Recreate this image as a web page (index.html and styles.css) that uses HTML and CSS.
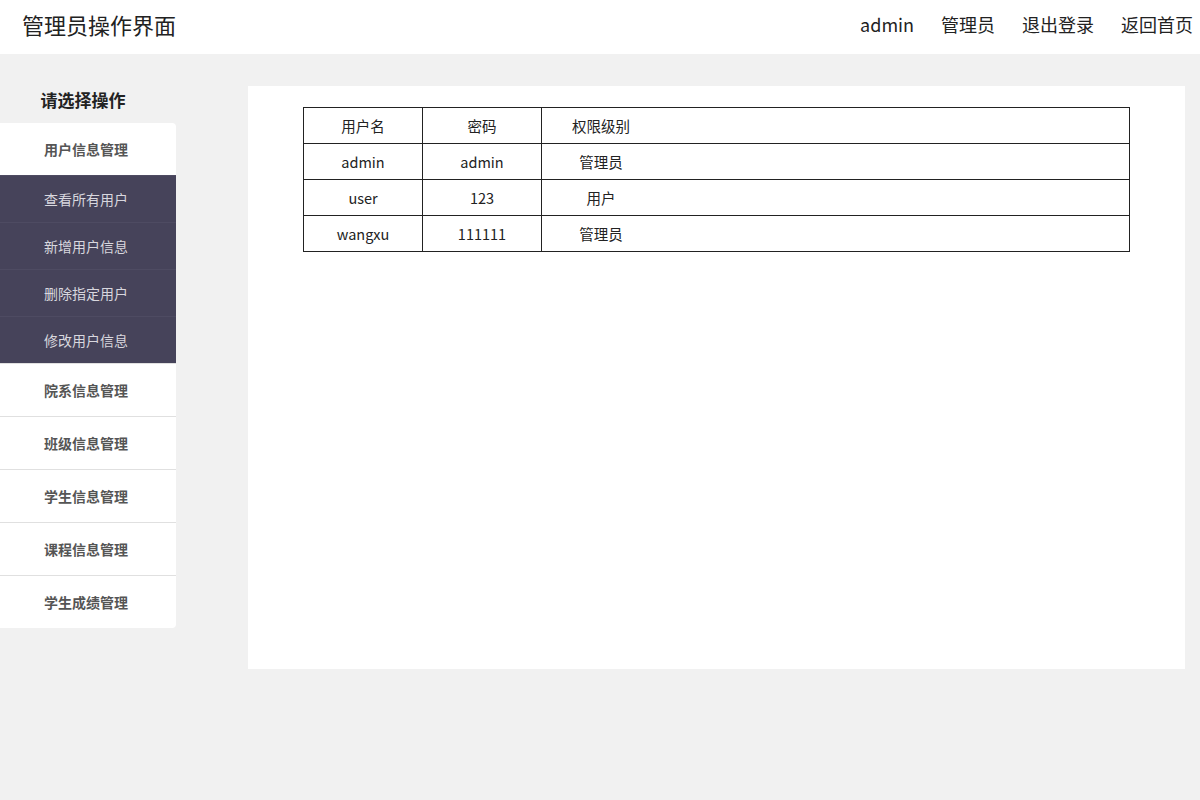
FILE: index.html
```html
<!DOCTYPE html>
<html lang="zh-CN">

<head>
    <meta charset="UTF-8">
    <meta name="viewport" content="width=device-width, initial-scale=1.0">
    <title>管理员操作界面</title>
    <link rel="stylesheet" href="styles.css">
</head>

<body>
    <div class="header">
        <div class="title">管理员操作界面</div>
        <div class="nav">
            <a href="#">admin</a>
            <a href="#">管理员</a>
            <a href="#">退出登录</a>
            <a href="#">返回首页</a>
        </div>
    </div>

    <div class="container">
        <div class="sidebar">
            <h3>请选择操作</h3>
            <ul class="menu">
                <li class="menu-item">用户信息管理
                    <ul class="sub-menu">
                        <li>查看所有用户</li>
                        <li>新增用户信息</li>
                        <li>删除指定用户</li>
                        <li>修改用户信息</li>
                    </ul>
                </li>
                <li class="menu-item">院系信息管理</li>
                <li class="menu-item">班级信息管理</li>
                <li class="menu-item">学生信息管理</li>
                <li class="menu-item">课程信息管理</li>
                <li class="menu-item">学生成绩管理</li>
            </ul>
        </div>

        <div class="content">
            <table class="user-table">
                <tr>
                    <td>用户名</td>
                    <td>密码</td>
                    <td><span class="level">权限级别</span></td>
                </tr>
                <tr>
                    <td>admin</td>
                    <td>admin</td>
                    <td><span class="level">管理员</span></td>
                </tr>
                <tr>
                    <td>user</td>
                    <td>123</td>
                    <td><span class="level">用户</span></td>
                </tr>
                <tr>
                    <td>wangxu</td>
                    <td>111111</td>
                    <td><span class="level">管理员</span></td>
                </tr>
            </table>
        </div>
    </div>
</body>

</html>
```

FILE: styles.css
```css
body {
    margin: 0;
    font-family: "Noto Sans CJK SC", "Noto Sans", sans-serif;
    background-color: #f1f1f1;
    color: #222;
}

.header {
    height: 54px;
    background-color: #fff;
    display: flex;
    align-items: center;
    justify-content: space-between;
    padding: 0 7px 6px 22px;
    box-sizing: border-box;
}

.title {
    font-size: 22px;
}

.nav {
    display: flex;
    gap: 27px;
}

.nav a {
    color: #222;
    text-decoration: none;
    font-size: 18px;
}

.container {
    display: flex;
    align-items: flex-start;
}

.sidebar {
    width: 176px;
}

.sidebar h3 {
    margin: 0;
    height: 69px;
    line-height: 92px;
    font-size: 17px;
    text-align: center;
    padding-right: 10px;
    box-sizing: border-box;
}

.menu {
    list-style: none;
    margin: 0;
    padding: 0;
    background-color: #fff;
    border-radius: 0 4px 4px 0;
    overflow: hidden;
}

.menu-item {
    line-height: 52px;
    text-align: center;
    padding-right: 4px;
    font-size: 14px;
    font-weight: bold;
    color: #555;
    border-top: 1px solid #e0e0e0;
}

.menu-item:first-child {
    border-top: none;
}

.sub-menu {
    list-style: none;
    margin: 0 -4px 0 0;
    padding: 0;
    background-color: #46435a;
}

.sub-menu li {
    line-height: 46px;
    font-size: 14px;
    font-weight: normal;
    color: #d8d7de;
    border-top: 1px solid #4e4b62;
    padding-right: 4px;
}

.content {
    margin: 32px 15px 0 72px;
    flex: 1;
    height: 583px;
    background-color: #fff;
    padding: 21px 55px 0 55px;
    box-sizing: border-box;
}

.user-table {
    width: 827px;
    border-collapse: collapse;
    font-size: 14.5px;
}

.user-table td {
    border: 1px solid #222;
    height: 35px;
    padding: 0;
    text-align: center;
}

.user-table td:nth-child(1),
.user-table td:nth-child(2) {
    width: 118px;
}

.user-table td:nth-child(3) {
    text-align: left;
}

.level {
    display: inline-block;
    width: 118px;
    text-align: center;
}
```
